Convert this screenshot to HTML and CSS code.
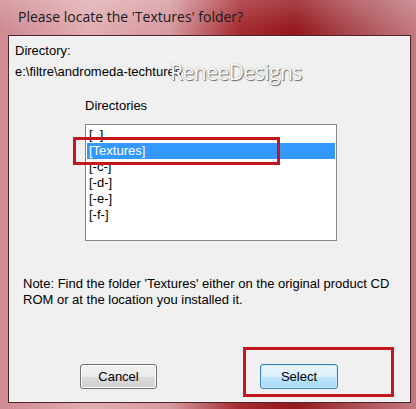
FILE: index.html
```html
<!DOCTYPE html>
<html lang="en">
<head>
    <meta charset="UTF-8">
    <title>Please locate the 'Textures' folder?</title>
    <link rel="stylesheet" href="styles.css">
</head>
<body>

    <div class="window">
        <div class="title-bar">Please locate the 'Textures' folder?</div>

        <div class="client">
            <div class="label">Directory:</div>
            <div class="path">e:\filtre\andromeda-techtures</div>

            <div class="dir-group">
                <div class="label">Directories</div>
                <ul class="dir-list">
                    <li>[..]</li>
                    <li class="selected">[Textures]</li>
                    <li>[-c-]</li>
                    <li>[-d-]</li>
                    <li>[-e-]</li>
                    <li>[-f-]</li>
                </ul>
            </div>

            <p class="note">Note: Find the folder 'Textures' either on the original product CD ROM or at the location you installed it.</p>

            <div class="buttons">
                <button class="btn">Cancel</button>
                <button class="btn default">Select</button>
            </div>
        </div>

        <!-- overlays -->
        <div class="watermark">ReneeDesigns</div>
        <div class="mark mark-list"></div>
        <div class="mark mark-select"></div>
    </div>

</body>
</html>
```

FILE: styles.css
```css
body {
    margin: 0;
    font-family: "Liberation Sans", Arial, sans-serif;
    font-size: 13px;
    color: #000;
}
.window {
    position: relative;
    width: 416px;
    height: 409px;
    box-sizing: border-box;
    padding: 0 5px 6px 8px;
    display: flex;
    flex-direction: column;
    background:
        linear-gradient(180deg, rgba(255,255,255,0.18) 0, rgba(255,255,255,0) 30px),
        linear-gradient(90deg, #cf8a92 0, #e2aeb3 90px, #d59aa0 170px, #a52a31 240px, #94171d 295px, #a8454c 345px, #c27a80 416px);
}
.title-bar {
    height: 35px;
    flex: none;
    padding-left: 10px;
    line-height: 33px;
    font-family: "Open Sans", "Noto Sans", sans-serif;
    font-size: 14px;
    color: #1a1a1a;
}
.client {
    flex: 1;
    background: #f0f0f0;
    border: 1px solid #4a2327;
    box-shadow: inset 0 0 0 1px #fbf3f4;
    padding: 7px 0 0 6px;
    display: flex;
    flex-direction: column;
}
.label {
    line-height: 15px;
}
.path {
    line-height: 15px;
    margin-top: 6px;
}
.dir-group {
    margin: 19px 0 0 70px;
}
.dir-list {
    list-style: none;
    margin: 11px 0 0 0;
    padding: 2px 1px 0 1px;
    width: 248px;
    height: 113px;
    background: #fff;
    border: 1px solid #828790;
}
.dir-list li {
    height: 16px;
    line-height: 16px;
    padding-left: 2px;
}
.dir-list li.selected {
    background: #3399ff;
    color: #fff;
}
.note {
    margin: 35px 0 0 8px;
    width: 380px;
    line-height: 16px;
}
.buttons {
    display: flex;
    gap: 103px;
    margin: 56px 0 0 65px;
}
.btn {
    width: 77px;
    height: 25px;
    padding: 0;
    font-family: "Liberation Sans", Arial, sans-serif;
    font-size: 13px;
    color: #000;
    border: 1px solid #707070;
    border-radius: 3px;
    background: linear-gradient(180deg, #f2f2f2 0, #ebebeb 50%, #dddddd 50%, #cfcfcf 100%);
    box-shadow: inset 0 0 0 1px #fcfcfc;
}
.btn.default {
    width: 78px;
    border-color: #3c7fb1;
    background: linear-gradient(180deg, #eaf6fd 0, #d9f0fc 50%, #bee6fd 50%, #a7d9f5 100%);
    box-shadow: inset 0 0 0 1px #c4ecfc;
}
.watermark {
    position: absolute;
    left: 170px;
    top: 58px;
    font-family: "Open Sans", sans-serif;
    font-size: 21px;
    color: #fff;
    letter-spacing: -0.5px;
    text-shadow: 1px 1px 1px #6a6a6a, 0 0 1px #888;
}
.mark {
    position: absolute;
    border: 3px solid #c4161c;
    box-sizing: border-box;
}
.mark-list {
    left: 73px;
    top: 137px;
    width: 207px;
    height: 28px;
}
.mark-select {
    left: 243px;
    top: 347px;
    width: 151px;
    height: 50px;
}
```
